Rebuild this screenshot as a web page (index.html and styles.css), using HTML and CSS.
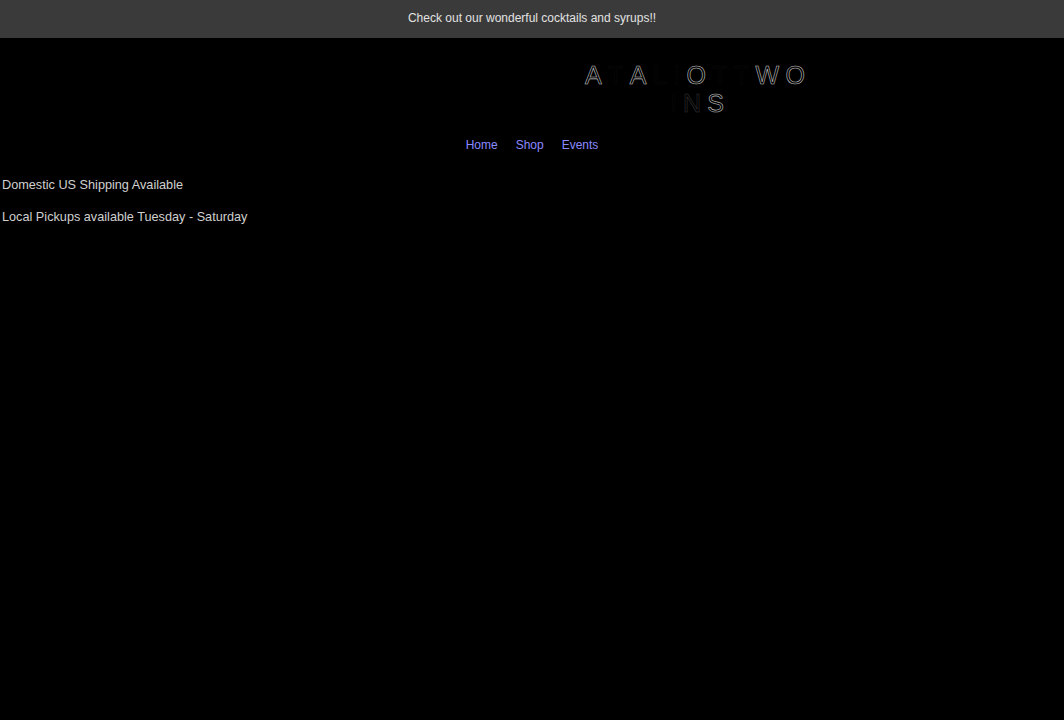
FILE: index.html
```html
<!doctype html>
<html lang="en">
	<head>
		<meta charset="UTF-8" />
		<title>Cocktails</title>
		<link rel="stylesheet" href="styles.css">
	</head>
	<body>
		<div class="announce">Check out our wonderful cocktails and syrups!!</div>
		<header class="head">
			<div class="logo">
				<div class="logo-line"><span class="on">A</span><span>T</span><span class="on">A</span><span>L</span><span>I</span><span class="on">O</span><span>T</span><span>T</span><span class="on">W</span><span class="on">O</span></div>
				<div class="logo-line second"><span>I</span><span class="half">N</span><span class="on">S</span></div>
			</div>
		</header>
		<nav class="nav">
			<a href="javascript:;">Home</a>
			<a href="javascript:;">Shop</a>
			<a href="javascript:;">Events</a>
		</nav>
		<section class="notes">
			<p>Domestic US Shipping Available</p>
			<p>Local Pickups available Tuesday - Saturday</p>
		</section>
	</body>
</html>
```
FILE: styles.css
```css
*{
	margin: 0;
	padding: 0;
}
body{
	background: #000;
	font-family: "Liberation Sans", Arial, sans-serif;
	height: 720px;
}
.announce{
	height: 38px;
	line-height: 37px;
	background: #3a3a3a;
	color: #e2e2e2;
	font-size: 12px;
	text-align: center;
}
.head{
	display: flex;
	padding: 23px 0 0 585px;
	height: 65px;
}
.logo{
	width: 220px;
	text-align: center;
	font-size: 25px;
	line-height: 28px;
	color: #000;
}
.logo-line{
	display: flex;
	justify-content: space-between;
}
.logo-line.second{
	justify-content: center;
	gap: 6px;
	padding-left: 4px;
}
.logo-line span{
	-webkit-text-stroke: 0.4px #0c0c0c;
}
.logo-line span.on{
	-webkit-text-stroke: 0.6px #c4c4c4;
}
.logo-line span.half{
	-webkit-text-stroke: 0.5px #3a3a3a;
}
.nav{
	display: flex;
	justify-content: center;
	gap: 18px;
	padding-top: 10px;
	height: 30px;
}
.nav a{
	font-size: 12px;
	line-height: 18px;
	color: #8a8aff;
	text-decoration: none;
}
.notes{
	padding: 11px 0 0 2px;
}
.notes p{
	font-size: 12.7px;
	line-height: 16px;
	color: #d0d0d0;
	margin-bottom: 16px;
}
```
